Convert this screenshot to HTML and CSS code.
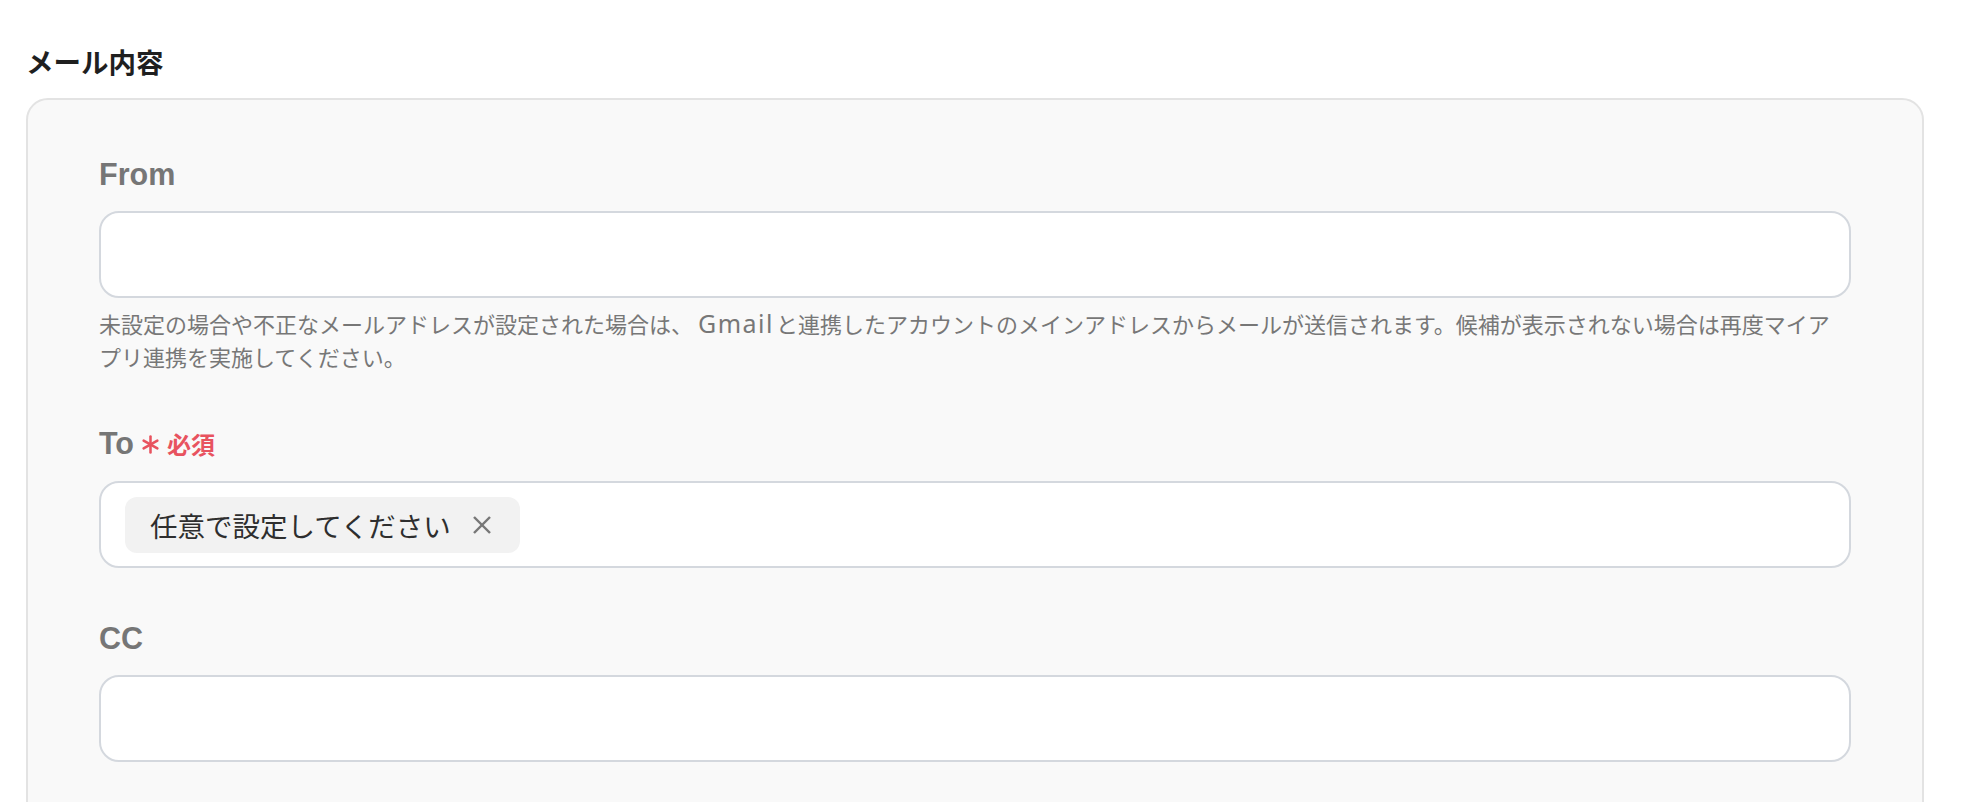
FILE: index.html
```html
<!DOCTYPE html>
<html lang="ja">
<head>
<meta charset="utf-8">
<title>メール内容</title>
<link rel="stylesheet" href="styles.css">
</head>
<body>
<div class="page">
  <h2 class="section-title">メール内容</h2>
  <div class="panel">
    <div class="field">
      <div class="field-label">From</div>
      <div class="input"></div>
      <p class="help">未設定の場合や不正なメールアドレスが設定された場合は、<span class="latin">Gmail</span>と連携したアカウントのメインアドレスからメールが送信されます。候補が表示されない場合は再度マイア<br>プリ連携を実施してください。</p>
    </div>
    <div class="field">
      <div class="field-label">
        <span>To</span>
        <svg class="req-mark" viewBox="0 0 18 18" width="19" height="19" aria-hidden="true">
          <line x1="9" y1="1.5" x2="9" y2="16.5"/>
          <line x1="2.5" y1="5.25" x2="15.5" y2="12.75"/>
          <line x1="2.5" y1="12.75" x2="15.5" y2="5.25"/>
        </svg>
        <span class="req-text">必須</span>
      </div>
      <div class="input input-tags">
        <span class="chip">
          <span class="chip-text">任意で設定してください</span>
          <svg class="chip-x" viewBox="0 0 18 18" width="18" height="18" aria-hidden="true">
            <line x1="1" y1="1" x2="17" y2="17"/>
            <line x1="17" y1="1" x2="1" y2="17"/>
          </svg>
        </span>
      </div>
    </div>
    <div class="field">
      <div class="field-label">CC</div>
      <div class="input"></div>
    </div>
  </div>
</div>
</body>
</html>
```

FILE: styles.css
```css
html {
  overflow: hidden;
}

body {
  margin: 0;
  background: #ffffff;
  font-family: "Noto Sans CJK JP", "Liberation Sans", sans-serif;
  color: #222222;
}

.page {
  padding: 41px 38px 0 26px;
}

.section-title {
  margin: 0 0 17px;
  font-size: 27.5px;
  line-height: 40px;
  font-weight: 700;
  color: #1f1f1f;
}

.panel {
  background: #f9f9f9;
  border: 2px solid #e3e3e3;
  border-radius: 22px;
  padding: 56px 71px 80px 71px;
}

.field + .field {
  margin-top: 52px;
}

.field-label {
  display: flex;
  align-items: baseline;
  font-family: "Liberation Sans", "Noto Sans CJK JP", sans-serif;
  font-size: 30.5px;
  line-height: 36px;
  font-weight: 700;
  color: #767676;
  margin-bottom: 19px;
}

.req-mark {
  margin-left: 7px;
  margin-bottom: -2px;
  stroke: #e8535f;
  stroke-width: 2.4;
  stroke-linecap: round;
  flex: none;
}

.req-text {
  margin-left: 7px;
  font-family: "Noto Sans CJK JP", sans-serif;
  font-size: 24px;
  font-weight: 700;
  color: #e8535f;
}

.input {
  box-sizing: border-box;
  height: 87px;
  background: #ffffff;
  border: 2px solid #d4d8de;
  border-radius: 20px;
}

.input-tags {
  display: flex;
  align-items: center;
  padding-left: 24px;
}

.chip {
  display: flex;
  align-items: center;
  height: 56px;
  padding: 0 29px 0 25px;
  background: #f2f2f2;
  border-radius: 12px;
}

.chip-text {
  font-size: 27.5px;
  color: #2e2e2e;
}

.chip-x {
  margin-left: 22px;
  stroke: #777777;
  stroke-width: 2.4;
  flex: none;
}

.help {
  margin: 9px 0 0;
  font-size: 22px;
  line-height: 33px;
  color: #777777;
}

.latin {
  font-family: "Noto Sans", sans-serif;
  font-size: 25px;
  letter-spacing: 1.5px;
  margin: 0 2px 0 5px;
}
```
